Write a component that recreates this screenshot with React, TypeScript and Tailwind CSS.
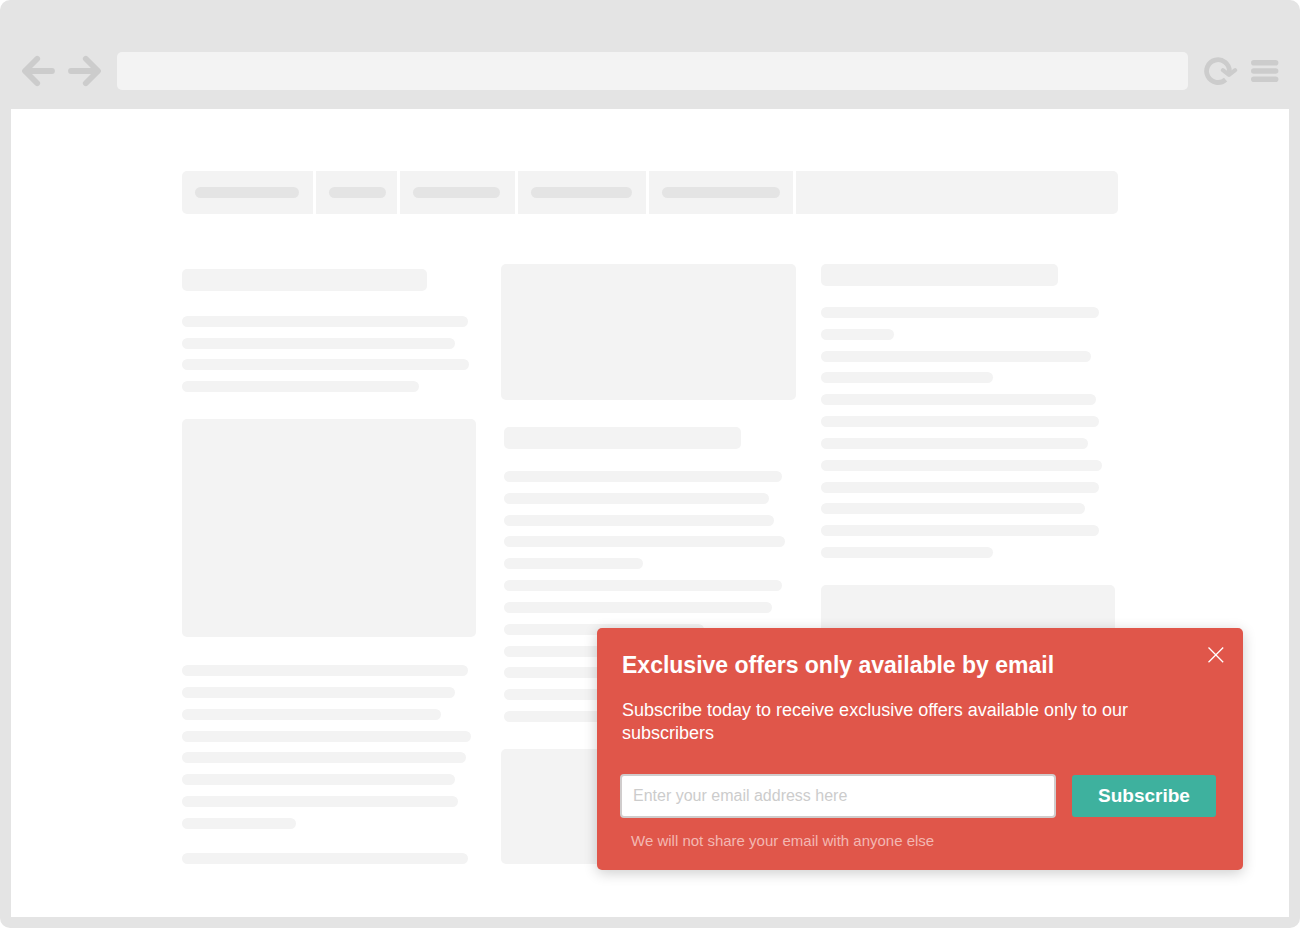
const NAV_ITEMS = [
  { cell: 131, bar: 104 },
  { cell: 81, bar: 57 },
  { cell: 115, bar: 87 },
  { cell: 128, bar: 101 },
  { cell: 144, bar: 118 },
];

const INTRO = [286, 273, 287, 237];
const STORY = [286, 273, 259, 289, 284, 273, 276, 114];
const MIDDLE = [278, 265, 270, 281, 139, 278, 268, 200, 270, 278, 264, 172];
const RIGHT = [278, 73, 270, 172, 275, 278, 267, 281, 278, 264, 278, 172];

function Lines({ widths, className = "" }: { widths: number[]; className?: string }) {
  return (
    <div className={`flex flex-col justify-between ${className}`}>
      {widths.map((width, i) => (
        <div key={i} className="h-[11px] max-w-full rounded-full bg-[#f3f3f3]" style={{ width }} />
      ))}
    </div>
  );
}

function Block({ className }: { className: string }) {
  return <div className={`rounded-[5px] bg-[#f3f3f3] ${className}`} />;
}

function BackIcon() {
  return (
    <svg width="34" height="32" viewBox="0 0 34 32" fill="none" stroke="currentColor" strokeWidth="5.8" strokeLinecap="round" strokeLinejoin="round" aria-hidden="true">
      <path d="M16.2 3.8L4 16L16.2 28.2" />
      <path d="M5 16H31" />
    </svg>
  );
}

function ForwardIcon() {
  return (
    <svg width="34" height="32" viewBox="0 0 34 32" fill="none" stroke="currentColor" strokeWidth="5.8" strokeLinecap="round" strokeLinejoin="round" aria-hidden="true">
      <path d="M18.8 3.8L31 16L18.8 28.2" />
      <path d="M30 16H4" />
    </svg>
  );
}

function ReloadIcon() {
  return (
    <svg width="34" height="30" viewBox="0 0 34 30" fill="none" stroke="currentColor" strokeWidth="4.8" aria-hidden="true">
      <path d="M21.6 23.6A11.4 11.4 0 1 1 25.4 15V17" />
      <path d="M18.9 14.2L25 18.9L31.1 14.2" strokeWidth="4.2" strokeLinecap="round" strokeLinejoin="round" />
    </svg>
  );
}

function MenuIcon() {
  return (
    <svg width="28" height="24" viewBox="0 0 28 24" fill="currentColor" aria-hidden="true">
      <rect x="0" y="1" width="27.4" height="5.6" rx="2.8" />
      <rect x="0" y="9.2" width="27.4" height="5.6" rx="2.8" />
      <rect x="0" y="17.4" width="27.4" height="5.6" rx="2.8" />
    </svg>
  );
}

function BrowserBar() {
  return (
    <header className="flex h-[109px] items-end px-[21px] pb-[19px] text-[#cccccc]">
      <div className="flex h-[38px] w-full items-center">
        <button type="button" aria-label="Back" className="mr-3">
          <BackIcon />
        </button>
        <button type="button" aria-label="Forward" className="mr-4">
          <ForwardIcon />
        </button>
        <input type="text" aria-label="Address" className="h-[38px] min-w-0 flex-1 rounded-[5px] bg-[#f3f3f3] px-3 text-[#888888] outline-none" />
        <button type="button" aria-label="Reload" className="ml-4">
          <ReloadIcon />
        </button>
        <button type="button" aria-label="Menu" className="ml-[13px]">
          <MenuIcon />
        </button>
      </div>
    </header>
  );
}

function SubscribePopup() {
  return (
    <section
      aria-labelledby="offer-title"
      className="absolute right-[46px] bottom-[47px] w-[646px] max-w-full rounded-[5px] bg-[#e0564a] px-[25px] pt-[22px] pb-[19px] text-white shadow-[0_3px_14px_rgba(0,0,0,0.2)]"
    >
      <button type="button" aria-label="Close" className="absolute top-[18px] right-[18px]">
        <svg width="18" height="18" viewBox="0 0 18 18" fill="none" stroke="currentColor" strokeWidth="1.3" aria-hidden="true">
          <path d="M1.5 1.5L16.2 16.2M16.2 1.5L1.5 16.2" />
        </svg>
      </button>
      <h2 id="offer-title" className="text-[23px] leading-[30px] font-bold">
        Exclusive offers only available by email
      </h2>
      <p className="mt-[19px] max-w-[520px] text-[18px] leading-[23px]">
        Subscribe today to receive exclusive offers available only to our subscribers
      </p>
      <form className="mt-[29px] -ml-0.5 flex items-center gap-4" onSubmit={(e) => e.preventDefault()}>
        <input
          type="email"
          aria-label="Email address"
          placeholder="Enter your email address here"
          className="h-11 min-w-0 flex-1 rounded-[4px] border-2 border-[#d0cccc] bg-white px-[11px] text-[16px] text-[#444444] outline-none placeholder:text-[#cccccc]"
        />
        <button type="submit" className="mr-0.5 h-[42px] w-36 rounded-[3px] bg-[#3eb19e] text-[19px] font-bold">
          Subscribe
        </button>
      </form>
      <p className="mt-[13px] pl-[9px] text-[15px] leading-5 text-[#f3b8b2]">We will not share your email with anyone else</p>
    </section>
  );
}

export default function App() {
  return (
    <div className="min-h-screen bg-white font-['Liberation_Sans',Arial,sans-serif]">
      <div className="flex min-h-screen flex-col rounded-[10px] bg-[#e4e4e4]">
        <BrowserBar />
        <main className="relative mx-[11px] mb-[11px] flex-1 bg-white pt-[62px] pb-[53px]">
          <div className="mx-auto max-w-[936px]">
            <nav aria-label="Main" className="flex h-[43px] gap-[3px] overflow-hidden rounded-[5px]">
              {NAV_ITEMS.map((item, i) => (
                <div key={i} className="flex items-center bg-[#f3f3f3] pl-[13px]" style={{ width: item.cell }}>
                  <div className="h-[11px] rounded-full bg-[#e4e4e4]" style={{ width: item.bar }} />
                </div>
              ))}
              <div className="flex-1 bg-[#f3f3f3]" />
            </nav>
            <div className="mt-[50px] grid grid-cols-3 gap-[25px] pr-[3px]">
              <div className="pt-[5px]">
                <Block className="h-[22px] w-[245px]" />
                <Lines widths={INTRO} className="mt-[25px] h-[76px]" />
                <Block className="mt-[27px] h-[218px]" />
                <Lines widths={STORY} className="mt-7 h-[164px]" />
                <Lines widths={[286]} className="mt-6" />
              </div>
              <div>
                <Block className="h-[136px]" />
                <div className="pl-[3px]">
                  <Block className="mt-[27px] h-[22px] w-[237px]" />
                  <Lines widths={MIDDLE} className="mt-[22px] h-[251px]" />
                </div>
                <Block className="mt-[27px] h-[115px]" />
              </div>
              <div>
                <Block className="h-[22px] w-[237px]" />
                <Lines widths={RIGHT} className="mt-[21px] h-[251px]" />
                <Block className="mt-[27px] h-[218px]" />
              </div>
            </div>
          </div>
          <SubscribePopup />
        </main>
      </div>
    </div>
  );
}
